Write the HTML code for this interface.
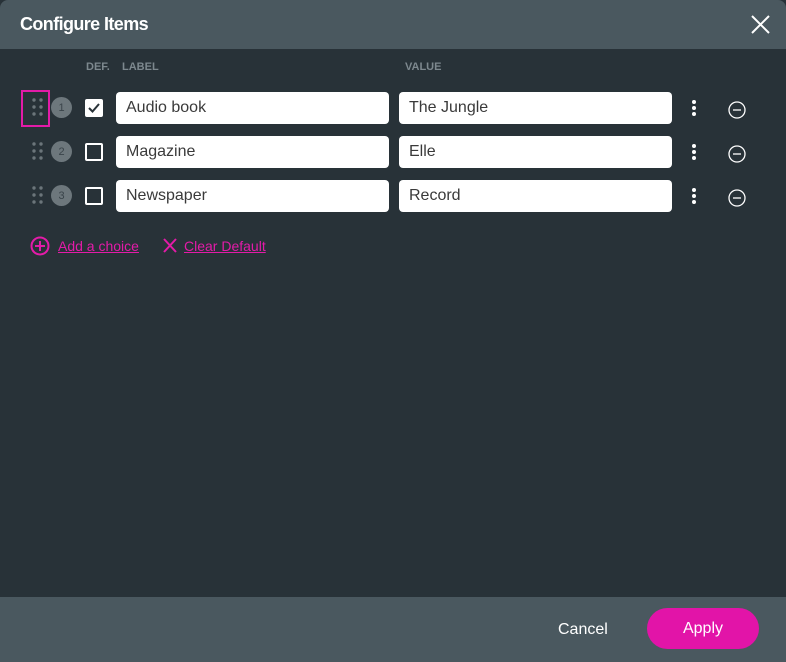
<!DOCTYPE html>
<html><head><style>
*{margin:0;padding:0;box-sizing:border-box}
body{width:786px;height:662px;background:#283238;font-family:"Liberation Sans",sans-serif;position:relative;overflow:hidden}
.hd{position:absolute;left:0;top:0;width:786px;height:49px;background:#4a585f;border-radius:8px 8px 0 0}
.hd h1{position:absolute;left:20px;top:14px;font-size:18px;color:#fff;font-weight:bold;letter-spacing:-0.6px}
.ft{position:absolute;left:0;top:597px;width:786px;height:65px;background:#4a585f}
.lbl{position:absolute;top:61px;font-size:11px;color:#7d888e;font-weight:bold}
.in{position:absolute;height:32px;background:#fff;border-radius:4px;font-size:16px;color:#3a3a3a;padding:7px 10px}
.cb{position:absolute;left:85px;width:18px;height:18px;border:2px solid #fff;border-radius:2px}
.num{position:absolute;left:51px;width:21px;height:21px;border-radius:50%;background:#6d777c;color:#3a444a;font-size:11px;text-align:center;line-height:22px}
a{color:#e31ba8;text-decoration:underline;font-size:14px;position:absolute;top:238px}
</style></head><body>
<div class="hd"><h1>Configure Items</h1>
<svg style="position:absolute;left:751px;top:15px" width="19" height="19"><path d="M1 1L18 18M18 1L1 18" stroke="#fff" stroke-width="2"/></svg></div>
<div class="lbl" style="left:86px">DEF.</div>
<div class="lbl" style="left:122px">LABEL</div>
<div class="lbl" style="left:405px">VALUE</div>
<div style="position:absolute;left:21px;top:90px;width:29px;height:37px;border:2px solid #e31ba8"></div>
<svg style="position:absolute;left:0;top:0" width="786" height="280">
<g fill="#6b757a">
<circle cx="34" cy="100" r="1.7"/><circle cx="41" cy="100" r="1.7"/><circle cx="34" cy="107" r="1.7"/><circle cx="41" cy="107" r="1.7"/><circle cx="34" cy="114" r="1.7"/><circle cx="41" cy="114" r="1.7"/>
<circle cx="34" cy="144" r="1.7"/><circle cx="41" cy="144" r="1.7"/><circle cx="34" cy="151" r="1.7"/><circle cx="41" cy="151" r="1.7"/><circle cx="34" cy="158" r="1.7"/><circle cx="41" cy="158" r="1.7"/>
<circle cx="34" cy="188" r="1.7"/><circle cx="41" cy="188" r="1.7"/><circle cx="34" cy="195" r="1.7"/><circle cx="41" cy="195" r="1.7"/><circle cx="34" cy="202" r="1.7"/><circle cx="41" cy="202" r="1.7"/>
</g>
<g fill="#fff">
<circle cx="694" cy="102" r="2"/><circle cx="694" cy="108" r="2"/><circle cx="694" cy="114" r="2"/>
<circle cx="694" cy="146" r="2"/><circle cx="694" cy="152" r="2"/><circle cx="694" cy="158" r="2"/>
<circle cx="694" cy="190" r="2"/><circle cx="694" cy="196" r="2"/><circle cx="694" cy="202" r="2"/>
</g>
<g stroke="#fff" fill="none" stroke-width="1.3">
<circle cx="737" cy="110" r="8"/><path d="M733 110h8"/>
<circle cx="737" cy="154" r="8"/><path d="M733 154h8"/>
<circle cx="737" cy="198" r="8"/><path d="M733 198h8"/>
</g>
<g stroke="#e31ba8" fill="none" stroke-width="2">
<circle cx="40" cy="246" r="8.5"/><path d="M40 241v10M35 246h10"/>
<path d="M164 239l12 13M176 239l-12 13"/>
</g>
</svg>
<div class="num" style="top:97px">1</div>
<div class="num" style="top:141px">2</div>
<div class="num" style="top:185px">3</div>
<div class="cb" style="top:99px;background:#fff"><svg width="14" height="14" style="position:absolute;left:0;top:0"><path d="M2 7l3.5 3.5L12 3" stroke="#283238" stroke-width="2" fill="none"/></svg></div>
<div class="cb" style="top:143px"></div>
<div class="cb" style="top:187px"></div>
<div class="in" style="left:116px;top:92px;width:273px">Audio book</div>
<div class="in" style="left:399px;top:92px;width:273px">The Jungle</div>
<div class="in" style="left:116px;top:136px;width:273px">Magazine</div>
<div class="in" style="left:399px;top:136px;width:273px">Elle</div>
<div class="in" style="left:116px;top:180px;width:273px">Newspaper</div>
<div class="in" style="left:399px;top:180px;width:273px">Record</div>
<a style="left:58px">Add a choice</a>
<a style="left:184px">Clear Default</a>
<div class="ft">
<div style="position:absolute;left:558px;top:24px;color:#fff;font-size:16px">Cancel</div>
<div style="position:absolute;left:647px;top:11px;width:112px;height:41px;border-radius:21px;background:#e214a8;color:#fff;font-size:16px;text-align:center;line-height:41px">Apply</div>
</div>
</body></html>
